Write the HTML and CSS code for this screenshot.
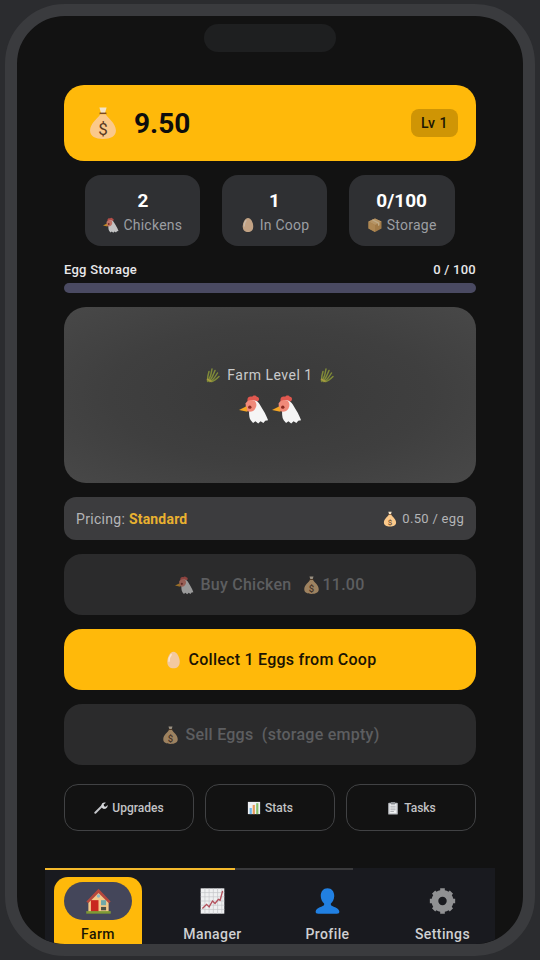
FILE: index.html
```html
<!DOCTYPE html>
<html lang="en">
<head>
    <meta charset="UTF-8">
    <meta name="viewport" content="width=device-width, initial-scale=1.0">
    <title>Egg Farm</title>
    <link rel="stylesheet" href="styles.css">
</head>
<body>
    <!-- Icon set -->
    <svg class="icon-defs" aria-hidden="true">
        <symbol id="i-bag" viewBox="0 0 32 32">
            <path d="M12.6 1.5h6.8l-1.5 5h-3.8z" fill="#f3e3c8"/>
            <rect x="12.8" y="6.2" width="6.4" height="1.5" fill="#7d4a1e"/>
            <path d="M13.4 7.7h5.2c1.6 3.4 9.6 8.4 9.6 15.4 0 5.6-5.2 7.9-12.2 7.9S3.800 28.700 3.800 23.100c0-7 8-12 9.600-15.400z" fill="#fbc98b"/>
            <text x="16" y="27" font-family="Roboto, sans-serif" font-size="16" text-anchor="middle" fill="#5a3a22">$</text>
        </symbol>
        <symbol id="i-hen" viewBox="0 0 32 32">
            <path d="M9 6c0-3 3-4 5-3 1-2 4-2 5 0 2 0 3 2 2 4l-3 2-9-1z" fill="#e0584f"/>
            <path d="M11 8c4-3 9-1 11 3 3 5 6 9 9 17l-3 .5-2 2.500-3-2-2.500 2.500-3-2.500-2.500 2-2.500-3c-2-3-2-8-1.500-14z" fill="#f5f5f5"/>
            <path d="M7 10c2-4 9-5 11-1 1.500 3 0 7-3 9-3 1.500-6 1-7.500-1.500z" fill="#f08a7a"/>
            <path d="M8 13 0 17l9 2z" fill="#f5a623"/>
            <circle cx="11.500" cy="14" r="1.800" fill="#8a2a20"/>
        </symbol>
        <symbol id="i-egg" viewBox="0 0 32 32">
            <path d="M16 2c6 0 10.500 9.500 10.500 17S22 30 16 30 5.500 26.500 5.500 19 10 2 16 2z" fill="#f3c9a0"/>
            <path d="M12 7c-2.500 3-4 7.500-3.500 11" stroke="#fbe6d0" stroke-width="2.500" stroke-linecap="round" fill="none"/>
        </symbol>
        <symbol id="i-box" viewBox="0 0 32 32">
            <path d="M16 3 29 9v14l-13 7L3 23V9z" fill="#c9944f"/>
            <path d="M16 3 29 9l-13 7L3 9z" fill="#e3b676"/>
            <path d="M3 9l13 7v14L3 23z" fill="#d9a55e"/>
            <path d="M9 6l13 7v5l3-1.500v-5L12 5z" fill="#f0d3a3"/>
        </symbol>
        <symbol id="i-grain" viewBox="0 0 32 32">
            <g fill="none" stroke="#7f8a38" stroke-width="3" stroke-linecap="round">
                <path d="M6 29C10 22 13 14 14 4"/>
                <path d="M9 29c4-6 8-14 11-22"/>
                <path d="M12 29c4-4 9-10 13-17"/>
                <path d="M5 28C5 22 6 15 8 9"/>
                <path d="M14 29c4-1 9-5 14-10"/>
            </g>
            <path d="M4 24l9 5" stroke="#a89a40" stroke-width="3"/>
        </symbol>
        <symbol id="i-wrench" viewBox="0 0 32 32">
            <path d="M3 27 19 11" stroke="#c4c6ca" stroke-width="4.500" stroke-linecap="round"/>
            <path d="M17 10c0-5 5-8 10-6l-5 4 1 4 4 1 4-4c1 5-3 9-8 9-2 0-4-1-5-3z" fill="#d5d7da"/>
        </symbol>
        <symbol id="i-chart" viewBox="0 0 32 32">
            <rect x="2" y="2" width="28" height="28" fill="#eef0f3"/>
            <rect x="6" y="16" width="5" height="14" fill="#6db4e8"/>
            <rect x="13" y="9" width="5" height="21" fill="#e89a5a"/>
            <rect x="21" y="5" width="5" height="25" fill="#86c06a"/>
        </symbol>
        <symbol id="i-clip" viewBox="0 0 32 32">
            <rect x="5" y="4" width="22" height="27" rx="2" fill="#b9bcc0"/>
            <rect x="8" y="7" width="16" height="21" fill="#f1f2f3"/>
            <rect x="11" y="2" width="10" height="6" rx="1" fill="#8d9094"/>
            <path d="M10 12h12M10 16h12M10 20h12M10 24h8" stroke="#8d9094" stroke-width="1.500"/>
        </symbol>
        <symbol id="i-house" viewBox="0 0 32 32">
            <path d="M4 15 16 3l12 12v14H4z" fill="#f4c98a"/>
            <path d="M1.500 17 16 1.500 30.500 17 28 18.500 16 6.500 4 18.500z" fill="#b5473c"/>
            <rect x="7" y="15" width="9" height="14" fill="#c9281f"/>
            <rect x="19" y="15" width="6" height="6" fill="#6fa8a8"/>
            <rect x="19" y="23" width="6" height="4" fill="#4b4f45"/>
            <circle cx="16" cy="10" r="2" fill="#8fb9c4"/>
            <rect x="1.500" y="28" width="29" height="3" fill="#7f9a35"/>
        </symbol>
        <symbol id="i-trend" viewBox="0 0 32 32">
            <rect x="2" y="1" width="28" height="30" fill="#eff0f1"/>
            <path d="M2 6h28M2 11h28M2 16h28M2 21h28M2 26h28M7 1v30M12 1v30M17 1v30M22 1v30M27 1v30" stroke="#c3c5c8" stroke-width=".8"/>
            <path d="M4 25l5-5 3 3 4-7 3 3 4-5 2 1 3-11" fill="none" stroke="#b3505c" stroke-width="1.600"/>
        </symbol>
        <symbol id="i-user" viewBox="0 0 32 32">
            <path d="M16 1c5 0 8 4 8 9 0 4-2 7-4 9v2c3 2 9 3 10 7 .4 2-1 3-3 3H5c-2 0-3.400-1-3-3 1-4 7-5 10-7v-2c-2-2-4-5-4-9 0-5 3-9 8-9z" fill="#2180e2"/>
        </symbol>
        <symbol id="i-gear" viewBox="0 0 32 32">
            <circle cx="16" cy="16" r="9" fill="none" stroke="#909193" stroke-width="8"/>
            <path d="M16 1v6M16 25v6M1 16h6M25 16h6M5.400 5.400l4.200 4.200M22.400 22.400l4.200 4.200M5.400 26.600l4.200-4.200M22.400 9.600l4.200-4.200" stroke="#909193" stroke-width="5.500"/>
        </symbol>
    </svg>

    <div class="phone">
        <div class="screen">
            <div class="notch"></div>

            <main class="content">
                <section class="balance">
                    <div class="balance-left">
                        <svg class="ico ico-bag"><use href="#i-bag"/></svg>
                        <span class="balance-value">9.50</span>
                    </div>
                    <span class="level">Lv 1</span>
                </section>

                <section class="stats">
                    <div class="stat">
                        <div class="stat-value">2</div>
                        <div class="stat-label"><svg class="ico"><use href="#i-hen"/></svg>Chickens</div>
                    </div>
                    <div class="stat">
                        <div class="stat-value">1</div>
                        <div class="stat-label"><svg class="ico"><use href="#i-egg"/></svg>In Coop</div>
                    </div>
                    <div class="stat">
                        <div class="stat-value">0/100</div>
                        <div class="stat-label"><svg class="ico"><use href="#i-box"/></svg>Storage</div>
                    </div>
                </section>

                <div class="storage-head">
                    <span>Egg Storage</span>
                    <span>0 / 100</span>
                </div>
                <div class="storage-bar"></div>

                <section class="farm">
                    <div class="farm-title">
                        <svg class="ico ico-grain"><use href="#i-grain"/></svg>
                        <span>Farm Level 1</span>
                        <svg class="ico ico-grain"><use href="#i-grain"/></svg>
                    </div>
                    <div class="farm-hens">
                        <svg class="ico ico-farmhen"><use href="#i-hen"/></svg>
                        <svg class="ico ico-farmhen"><use href="#i-hen"/></svg>
                    </div>
                </section>

                <div class="pricing">
                    <span>Pricing: <strong>Standard</strong></span>
                    <span class="pricing-rate"><svg class="ico"><use href="#i-bag"/></svg>0.50 / egg</span>
                </div>

                <button class="action action-off"><svg class="ico"><use href="#i-hen"/></svg>Buy Chicken<svg class="ico ico-price"><use href="#i-bag"/></svg>11.00</button>
                <button class="action action-on"><svg class="ico"><use href="#i-egg"/></svg>Collect 1 Eggs from Coop</button>
                <button class="action action-off"><svg class="ico"><use href="#i-bag"/></svg>Sell Eggs &nbsp;(storage empty)</button>

                <div class="minis">
                    <button class="mini"><svg class="ico"><use href="#i-wrench"/></svg>Upgrades</button>
                    <button class="mini"><svg class="ico"><use href="#i-chart"/></svg>Stats</button>
                    <button class="mini"><svg class="ico"><use href="#i-clip"/></svg>Tasks</button>
                </div>
            </main>

            <nav class="tabbar">
                <div class="tab-progress"><div class="tab-progress-fill"></div></div>
                <div class="tabs">
                    <a class="tab tab-active">
                        <span class="tab-pill"><svg class="ico"><use href="#i-house"/></svg></span>
                        <span>Farm</span>
                    </a>
                    <a class="tab">
                        <span class="tab-pill"><svg class="ico"><use href="#i-trend"/></svg></span>
                        <span>Manager</span>
                    </a>
                    <a class="tab">
                        <span class="tab-pill"><svg class="ico"><use href="#i-user"/></svg></span>
                        <span>Profile</span>
                    </a>
                    <a class="tab">
                        <span class="tab-pill"><svg class="ico"><use href="#i-gear"/></svg></span>
                        <span>Settings</span>
                    </a>
                </div>
            </nav>
        </div>
    </div>
</body>
</html>
```

FILE: styles.css
```css
* {
    box-sizing: border-box;
}
html, body {
    height: 100%;
}
body {
    margin: 0;
    padding: 4px 5px 0;
    background-color: #2b2c2f;
    font-family: Roboto, "Liberation Sans", sans-serif;
    color: #fff;
    overflow: hidden;
}
.icon-defs {
    display: none;
}
.ico {
    display: inline-block;
    width: 16px;
    height: 16px;
    flex: none;
}
.phone {
    width: 530px;
    height: 952px;
    border: 12px solid #3a3b3e;
    border-radius: 60px;
    background-color: #121212;
    overflow: hidden;
}
.screen {
    display: flex;
    flex-direction: column;
    height: 100%;
    padding: 0 28px;
}
.notch {
    width: 132px;
    height: 28px;
    margin: 8px auto 0;
    border-radius: 14px;
    background-color: #1e1f20;
    flex: none;
}
.content {
    flex: 1;
    padding: 33px 19px 0;
}

/* Saldo */
.balance {
    display: flex;
    align-items: center;
    justify-content: space-between;
    height: 76px;
    padding: 0 18px 0 22px;
    border-radius: 20px;
    background-color: #ffb90a;
}
.balance-left {
    display: flex;
    align-items: center;
    gap: 14px;
}
.ico-bag {
    width: 34px;
    height: 38px;
}
.balance-value {
    font-size: 28px;
    font-weight: 700;
    color: #0d0d0d;
}
.level {
    padding: 6px 10px;
    border-radius: 8px;
    background-color: #cf9505;
    color: #1c1503;
    font-size: 14px;
    font-weight: 500;
    letter-spacing: .5px;
}

/* Cards */
.stats {
    display: flex;
    justify-content: space-evenly;
    margin-top: 14px;
}
.stat {
    height: 71px;
    padding: 14px 18px 0;
    border-radius: 16px;
    background-color: #2f3033;
    text-align: center;
}
.stat-value {
    font-size: 19px;
    font-weight: 700;
    line-height: 24px;
}
.stat-label {
    display: flex;
    align-items: center;
    justify-content: center;
    gap: 4px;
    margin-top: 2px;
    color: #9c9ea2;
    font-size: 14px;
    letter-spacing: .25px;
    line-height: 20px;
    white-space: nowrap;
}
.stat-label .ico {
    opacity: .75;
}
.storage-head {
    display: flex;
    justify-content: space-between;
    margin-top: 16px;
    font-size: 13px;
    font-weight: 500;
    letter-spacing: .25px;
    line-height: 16px;
    color: #e8e8ea;
}
.storage-bar {
    height: 10px;
    margin-top: 5px;
    border-radius: 5px;
    background-color: #4a4a62;
}
.farm {
    display: flex;
    flex-direction: column;
    align-items: center;
    justify-content: center;
    height: 176px;
    margin-top: 14px;
    border-radius: 22px;
    background: radial-gradient(ellipse at center, #393939 0%, #3f3f3f 55%, #484848 100%);
}
.farm-title {
    display: flex;
    align-items: center;
    gap: 6px;
    height: 16px;
    color: #c9cacb;
    font-size: 14px;
    letter-spacing: .5px;
}
.ico-grain {
    width: 16px;
    height: 16px;
}
.farm-hens {
    display: flex;
    gap: 3px;
    margin-top: 11px;
}
.ico-farmhen {
    width: 30px;
    height: 30px;
}
.pricing {
    display: flex;
    align-items: center;
    justify-content: space-between;
    height: 43px;
    margin-top: 14px;
    padding: 0 12px;
    border-radius: 12px;
    background-color: #3c3c3e;
    color: #b4b5b7;
    font-size: 14px;
    letter-spacing: .3px;
}
.pricing strong {
    color: #e9b130;
    font-weight: 700;
    letter-spacing: .2px;
}
.pricing-rate {
    display: flex;
    align-items: center;
    gap: 4px;
    font-size: 13px;
    letter-spacing: .3px;
}

/* Botoes */
.action {
    display: flex;
    align-items: center;
    justify-content: center;
    width: 100%;
    height: 61px;
    margin-top: 14px;
    gap: 6px;
    border: none;
    border-radius: 18px;
    font-family: inherit;
    font-size: 16px;
    font-weight: 500;
    letter-spacing: .25px;
}
.action .ico {
    width: 19px;
    height: 20px;
}
.action-off {
    background-color: #2b2b2c;
    color: #5d5e60;
}
.action-off .ico {
    opacity: .55;
}
.action-off .ico-price {
    margin-left: 5px;
    margin-right: -5px;
}
.action-on {
    background-color: #ffb90a;
    color: #1a1303;
}
.minis {
    display: grid;
    grid-template-columns: repeat(3, 1fr);
    gap: 11px;
    margin-top: 19px;
}
.mini {
    display: flex;
    align-items: center;
    justify-content: center;
    gap: 4px;
    height: 47px;
    border: 1.5px solid #414244;
    border-radius: 14px;
    background: none;
    color: #c2c3c5;
    font-family: inherit;
    font-size: 12px;
    font-weight: 500;
}
.mini .ico {
    width: 14px;
    height: 14px;
}

/* Navegacao */
.tabbar {
    flex: none;
    height: 76px;
    background-color: #191a1f;
}
.tab-progress {
    width: 308px;
    height: 2px;
    background-color: #3a3a3c;
}
.tab-progress-fill {
    width: 190px;
    height: 100%;
    background-color: #f4b92c;
}
.tabs {
    display: grid;
    grid-template-columns: 101px 115px 115px 115px;
    height: 74px;
    padding: 7px 0 0 9px;
}
.tab {
    display: flex;
    flex-direction: column;
    align-items: center;
    padding-top: 5px;
    color: #cfd0d2;
    font-size: 14px;
    font-weight: 500;
    letter-spacing: .4px;
}
.tab-pill {
    display: flex;
    align-items: center;
    justify-content: center;
    width: 68px;
    height: 38px;
    margin-bottom: 6px;
}
.tab-pill .ico {
    width: 27px;
    height: 28px;
}
.tab-active {
    width: 88px;
    height: 67px;
    border-radius: 14px 14px 0 0;
    background-color: #ffb90a;
    color: #1c1503;
}
.tab-active .tab-pill {
    border-radius: 19px;
    background-color: #44465a;
}
```
